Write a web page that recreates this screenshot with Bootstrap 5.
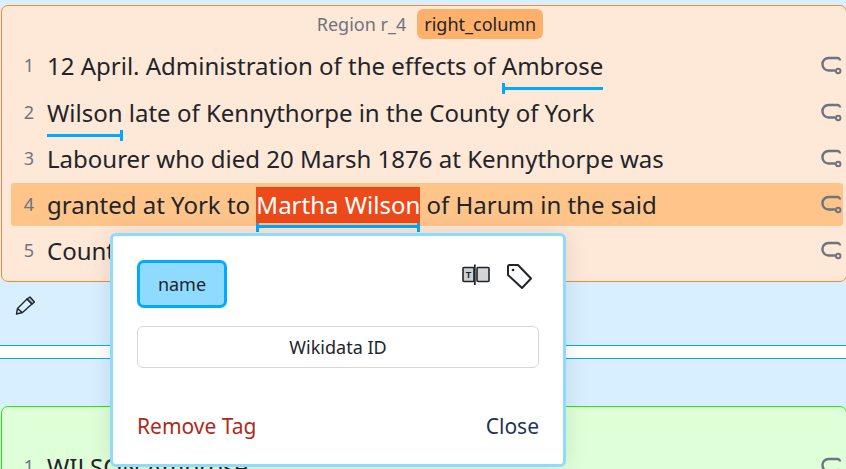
<!DOCTYPE html>
<html lang="en">
<head>
<meta charset="utf-8">
<title>Region</title>
<link href="https://cdn.jsdelivr.net/npm/bootstrap@5.3.0/dist/css/bootstrap.min.css" rel="stylesheet">
<style>
html,body{height:469px;overflow:hidden}
body{background:#d7efff;font-family:"Noto Sans",sans-serif;color:#212529;position:relative;padding-top:5px}
.region-box{border:1px solid #f58a2e;border-radius:7px;background:#fee8d8;margin-left:1px;margin-right:-1px;height:277px;padding:3px 3px 0 9px}
.region-green{border-color:#22ee00;background:#deffd8;height:100px;padding-top:38px}
.region-head{height:30px;font-size:18px;color:#6c757d;gap:11px;margin-left:6px}
.region-tag{background:#ffb06b;color:#212529;border-radius:6px;padding:0 7px;height:30px;line-height:30px}
.text-line{height:43px;margin-bottom:3px;font-size:24px;border-radius:3px}
.text-line.active-line{background:#ffc48a}
.region-head + .text-line{margin-top:5px;margin-bottom:4px}
.line-num{width:36px;flex:none;font-size:18px;color:#6c757d;text-align:right;padding-right:13px}
.line-text{flex:1;white-space:nowrap;line-height:43px}
.line-icon{flex:none;width:24px;height:24px;margin-right:0;color:#6c757d}
.tok{position:relative;display:inline-block;line-height:36px}
.tok-sel{background:#ec4a1a;color:#fff}
.tok::after{content:"";position:absolute;left:0;right:0;bottom:-6px;height:3px;background:#00aaff}
.tok-sel::after{bottom:-5px}
.tick-l::before,.tick-r::before{content:"";position:absolute;width:3px;height:11px;background:#00aaff;bottom:-10px}
.tick-l::before{left:0}
.tick-r::before{right:0}
.tick-both::before{content:"";position:absolute;left:0;right:0;bottom:-9px;height:9px;border-left:3px solid #00aaff;border-right:3px solid #00aaff}
.tool-row{height:63px;padding:14px 0 0 15px}
.divider-band{height:14px;background:#fff;border-top:1px solid #00aaff;border-bottom:1px solid #00aaff;margin-bottom:47px}
.tag-pop{position:absolute;left:110px;top:233px;width:456px;height:234px;background:#fff;border:3px solid #8fdbff;border-radius:6px;box-shadow:0 0 24px rgba(0,0,0,.1);padding:24px 24px 0;z-index:5}
.type-btn{width:90px;height:48px;background:#8fdbff;border:3px solid #00aaff;border-radius:7px;font-size:18px;color:#212529;padding:0}
.wiki-field{height:42px;margin-top:18px;width:402px;border:1px solid #d8d8d8;border-radius:6px;font-size:18px;text-align:center;color:#212529;font-family:inherit;box-shadow:none}
.wiki-field::placeholder{color:#212529;opacity:1}
.pop-links{margin-top:43px;font-size:21px;line-height:30px;width:402px}
.link-remove{color:#b02a1a;text-decoration:none}
.link-close{color:#1d3557;text-decoration:none}
.pop-icons{gap:16px;padding:3px 5px 0 0}
.glyph-t{font:bold 9px "Liberation Sans",sans-serif;fill:#212529;text-anchor:middle}
</style>
</head>
<body>
<svg width="0" height="0" class="d-block position-absolute"><defs><symbol id="route-ic" viewBox="0 0 24 24"><path d="M21 6.500a2.500 2.500 0 0 0-2.500-2.500H9.500a6 6 0 0 0-6 6.500 6 6 0 0 0 6 6H16" fill="none" stroke="currentColor" stroke-width="2.400"/><circle cx="19.200" cy="17" r="2.200" fill="none" stroke="currentColor" stroke-width="2"/></symbol></defs></svg>
<div class="region-box">
  <div class="region-head d-flex justify-content-center align-items-center"><span>Region r_4</span><span class="region-tag">right_column</span></div>
  <div class="text-line d-flex align-items-center"><div class="line-num">1</div><div class="line-text">12 April. Administration of the effects of <span class="tok tick-l">Ambrose</span></div><svg class="line-icon"><use href="#route-ic"/></svg></div>
  <div class="text-line d-flex align-items-center"><div class="line-num">2</div><div class="line-text"><span class="tok tick-r">Wilson</span> late of Kennythorpe in the County of York</div><svg class="line-icon"><use href="#route-ic"/></svg></div>
  <div class="text-line d-flex align-items-center"><div class="line-num">3</div><div class="line-text">Labourer who died 20 Marsh 1876 at Kennythorpe was</div><svg class="line-icon"><use href="#route-ic"/></svg></div>
  <div class="text-line active-line d-flex align-items-center"><div class="line-num">4</div><div class="line-text">granted at York to <span class="tok tok-sel tick-both">Martha Wilson</span> of Harum in the said</div><svg class="line-icon"><use href="#route-ic"/></svg></div>
  <div class="text-line d-flex align-items-center"><div class="line-num">5</div><div class="line-text">County</div><svg class="line-icon"><use href="#route-ic"/></svg></div>
</div>
<div class="tool-row"><svg class="d-block" width="20" height="20" viewBox="0 0 20 20" fill="none" stroke="#212529" stroke-width="1.400" stroke-linejoin="round"><path d="M12 3l3-2 4.500 5-2.500 2z" fill="#9fc0c8"/><path d="M1.500 18l1-5.500L12 3l5 5-9.500 8.500z"/><path d="M2.800 12.800l4.500 3.800"/></svg></div>
<div class="divider-band"></div>
<div class="region-box region-green">
  <div class="text-line d-flex align-items-center"><div class="line-num">1</div><div class="line-text">WILSON Ambrose</div><svg class="line-icon"><use href="#route-ic"/></svg></div>
</div>
<div class="tag-pop">
  <div class="d-flex justify-content-between align-items-start">
    <button type="button" class="btn type-btn">name</button>
    <div class="pop-icons d-flex align-items-start">
      <svg width="28" height="24" viewBox="0 0 28 24" fill="none" stroke="#212529" stroke-width="1.600"><rect x="1" y="4.500" width="11" height="14" fill="#cdd0d2" rx="1"/><rect x="15" y="4.500" width="12" height="14" fill="#d2d4d6" rx="1"/><path d="M12.800 1.500v20.500" stroke-width="1.800"/><text class="glyph-t" x="6.500" y="15" stroke="none">T</text></svg>
      <svg width="28" height="28" viewBox="0 0 28 28" fill="none" stroke="#212529" stroke-width="2" stroke-linejoin="round"><path d="M2 3.500A1.500 1.500 0 0 1 3.500 2h8.500l13 13.500-9 9.500L2 12z"/><circle cx="7" cy="7" r="1.300" fill="#212529" stroke="none"/></svg>
    </div>
  </div>
  <input class="form-control wiki-field" type="text" placeholder="Wikidata ID">
  <div class="pop-links d-flex justify-content-between"><a href="#" class="link-remove">Remove Tag</a><a href="#" class="link-close">Close</a></div>
</div>
<script src="https://cdn.jsdelivr.net/npm/bootstrap@5.3.0/dist/js/bootstrap.bundle.min.js"></script>
</body>
</html>
